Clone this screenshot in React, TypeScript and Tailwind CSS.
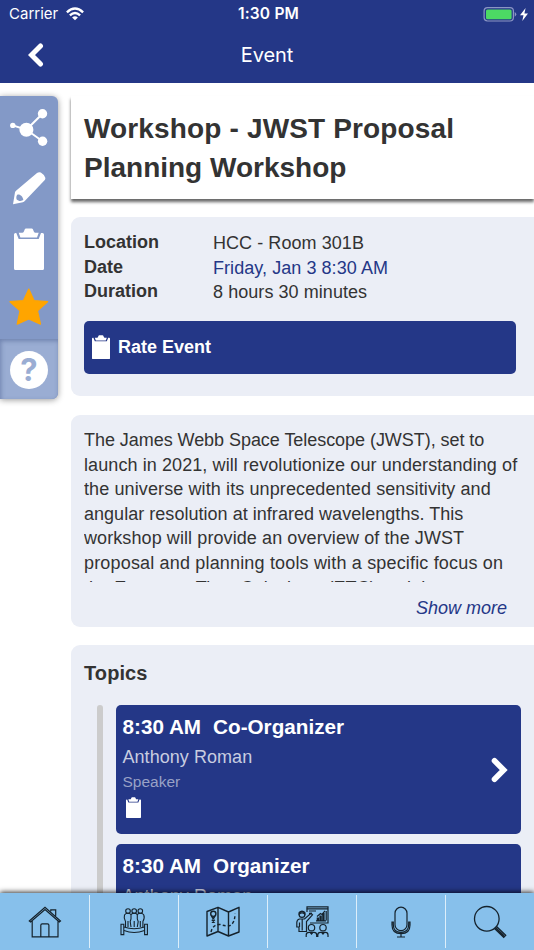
import React from 'react';

interface Topic {
  id: number;
  time: string;
  title: string;
  speaker: string;
  role: string;
}

const topics: Topic[] = [
  { id: 1, time: '8:30 AM', title: 'Co-Organizer', speaker: 'Anthony Roman', role: 'Speaker' },
  { id: 2, time: '8:30 AM', title: 'Organizer', speaker: 'Anthony Roman', role: 'Speaker' },
];

const ClipboardIcon = ({ className }: { className: string }) => (
  <svg viewBox="0 0 30 42" className={className} fill="currentColor" preserveAspectRatio="none">
    <path d="M1.500 5H2.300L4.700 11H24.700L27 5H28.500A1.500 1.500 0 0 1 30 6.500V40.500A1.500 1.500 0 0 1 28.500 42H1.500A1.500 1.500 0 0 1 0 40.500V6.500A1.500 1.500 0 0 1 1.500 5Z" />
    <path d="M4.700 4.700H8.500Q9.700 4.500 10 3.300L10.800 1.300Q11 .6 12 .6H17.700Q18.600 .6 18.900 1.300L19.700 3.300Q20 4.500 21.200 4.700H24.700L23 9.500H6.400Z" />
  </svg>
);

const ShareIcon = () => (
  <svg viewBox="0 0 58 40" className="h-10 w-[58px]" fill="white" stroke="white">
    <path d="M42.500 5.800L26.400 21.700L42.600 33.300M26.400 21.700L12.800 17.400" fill="none" strokeWidth="2" />
    <circle cx="26.400" cy="21.700" r="7" stroke="none" />
    <circle cx="42.500" cy="5.800" r="4.700" stroke="none" />
    <circle cx="42.600" cy="33.300" r="4.700" stroke="none" />
    <circle cx="12.800" cy="17.400" r="2.700" stroke="none" />
  </svg>
);

const PencilIcon = () => (
  <svg viewBox="0 0 58 40" className="h-10 w-[58px]" fill="white">
    <path d="M13 36.300L15 24.300Q15.200 23.400 16 22.700L37 5Q38.800 3.700 40.800 4.500Q44 6.300 45.300 9.800Q45.600 11 44.800 12L25 32.800Q24 34 22.800 34.300Z" />
    <path d="M17 27C19.500 25.600 22.700 28.300 23.300 31.800C22 33.400 18.500 33.500 16.500 31.200Q15.800 29 17 27Z" fill="#8399c7" />
  </svg>
);

const StarIcon = () => (
  <svg viewBox="0 0 58 40" className="h-10 w-[58px]" fill="#ffa500" stroke="#ffa500" strokeLinejoin="round" strokeWidth="1.200">
    <path d="M28.800 2L34 13.500L47.600 14.700L37.500 23.800L40.500 37.200L28.800 32L17.200 37.200L20 23.800L10 14.700L23.500 13.500Z" />
  </svg>
);

const HomeIcon = () => (
  <svg viewBox="0 0 34 34" className="size-[34px]" fill="none" stroke="#15222c" strokeWidth="1.200">
    <path d="M1.300 16L17 2.200L32.500 16L31.300 17L17 4.500L2.600 17ZM4.200 16V31.800H30V16M12.800 31.800V20.200Q12.800 18.800 14.200 18.800H19.500Q20.900 18.800 20.900 20.200V31.800M22.800 6.200V4.800H27.700V10.800" />
  </svg>
);

const MeetingIcon = () => (
  <svg viewBox="0 0 34 34" className="size-[34px]" fill="none" stroke="#15222c" strokeWidth="1.100">
    <circle cx="11" cy="6" r="2.300" />
    <circle cx="17.200" cy="6" r="2.300" />
    <circle cx="23.300" cy="6" r="2.300" />
    <path d="M8.500 22V16.500Q6.500 13 7.500 10Q8.500 8.300 11 8.300Q13 8.300 14 9.600Q15.200 8.300 17.200 8.300Q19.200 8.300 20.300 9.600Q21.400 8.300 23.300 8.300Q26 8.300 26.800 10Q28 13 25.900 16.500V22M14 9.600V14L13.200 16.500L14 22M20.300 9.600V14L21.200 16.500L20.300 22M11 16V22M17.200 16V22M23.300 16V22" />
    <path d="M7 22Q17 25.500 27.500 22M7 25.500Q17 29.500 27.500 25.500" />
    <path d="M4 19.200H6.800V29.600H4ZM27.600 19.200H30.400V29.600H27.600Z" />
  </svg>
);

const MapIcon = () => (
  <svg viewBox="0 0 34 34" className="size-[34px]" fill="none" stroke="#15222c" strokeWidth="1.400" strokeLinejoin="round">
    <path d="M1 6.500L12 2.300L22.500 7L33 2.300V27L22.500 31L12 26.500L1 31ZM12 2.300V26.500M22.500 7V31" />
    <circle cx="7.300" cy="8.800" r="2.600" />
    <path d="M5.500 11L7.300 13.800L9 11M5.800 14.800L8.800 17.600M8.800 14.800L5.800 17.600" />
    <path d="M5 27Q7 19 14 19.500Q20 21.500 24 20.500Q29 18 29 8.500" strokeDasharray="3 2.200" />
  </svg>
);

const PresentationIcon = () => (
  <svg viewBox="0 0 34 34" className="size-[34px]" fill="none" stroke="#15222c" strokeWidth="1.200">
    <path d="M12 7V1.800H33V18H15M11.300 3.800H33M14 6H21M14 8.300H17M31.200 6V15.500" />
    <path d="M22.300 15.500V13H23.500V15.500M25 15.500V11H26.200V15.500M27.800 15.500V8.500H29V15.500M22 11.500L25.500 8.500L27 9.500L30 5.800M21 15.800H31" />
    <circle cx="7" cy="9.500" r="2.900" />
    <path d="M4.200 9Q7 6.800 9.800 9V7.500Q7 4.800 4.200 7.500ZM10 26.500H4V22H1.800V17.500Q1.800 14.800 4.500 14H9.500L16 8.300L17.500 9.800L11.500 16.500V26.500ZM4.500 17.500V22M7.200 14.500V25.500" />
    <circle cx="16.500" cy="22.700" r="3.200" />
    <circle cx="28" cy="22.700" r="3.200" />
    <path d="M11.200 32V30Q11.200 27.300 14 27.300H19Q21.700 27.300 21.700 30V32M22.800 32V30Q22.800 27.300 25.500 27.300H30.500Q33 27.300 33 30V32M15 27.300L16.500 29L18 27.300M26.500 27.300L28 29L29.500 27.300" />
  </svg>
);

const MicIcon = () => (
  <svg viewBox="0 0 34 34" className="size-[34px]" fill="none" stroke="#15222c" strokeWidth="1.200">
    <rect x="11" y="2.200" width="12" height="23.500" rx="6" />
    <path d="M9.300 17V19.500Q9.300 27.300 17 27.300Q24.700 27.300 24.700 19.500V17H26V20Q26 28.700 17 28.700Q8 28.700 8 20V17ZM17 28.700V31.800M13 32H21" />
  </svg>
);

const SearchIcon = () => (
  <svg viewBox="0 0 34 34" className="size-[34px]" fill="none" stroke="#15222c" strokeWidth="1.300">
    <circle cx="13.800" cy="13.800" r="12.300" />
    <path d="M21.300 23.300L30.700 32.300L32.700 30.300L23.300 21.300M22.600 22.600L31 30.700" />
  </svg>
);

const navItems = [
  { id: 'home', icon: <HomeIcon /> },
  { id: 'meeting', icon: <MeetingIcon /> },
  { id: 'map', icon: <MapIcon /> },
  { id: 'sessions', icon: <PresentationIcon /> },
  { id: 'speakers', icon: <MicIcon /> },
  { id: 'search', icon: <SearchIcon /> },
];

const Header = () => (
  <header className="h-[83px] shrink-0 bg-[#243787] text-white font-['Inter',sans-serif]">
    <div className="grid h-7 grid-cols-3 items-center pl-[9px] pr-1.5">
      <div className="flex items-center gap-2">
        <span className="text-[15px] leading-7">Carrier</span>
        <svg viewBox="0 0 18 14" className="h-3.5 w-[18px]" fill="none" stroke="white" strokeWidth="2.400">
          <path d="M.9 5.300Q9 -2.200 17.100 5.300M3.900 8.400Q9 3.700 14.100 8.400" />
          <path d="M9 13.300L6.100 10.400Q9 8 11.900 10.400Z" fill="white" stroke="none" />
        </svg>
      </div>
      <span className="text-center text-[15.500px] font-semibold leading-7 tracking-[0.200px]">1:30 PM</span>
      <div className="flex items-center justify-end gap-[3px]">
        <svg viewBox="0 0 33 15" className="h-[15px] w-[34px]">
          <rect x=".6" y=".6" width="29.300" height="13.400" rx="3.400" fill="none" stroke="#8b96c4" strokeWidth="1.200" />
          <rect x="2.500" y="2.500" width="25.600" height="9.700" rx="1.500" fill="#4cd964" />
          <path d="M31.200 5V9.700Q32.800 8.500 32.800 7.300Q32.800 6 31.200 5Z" fill="#8b96c4" />
        </svg>
        <svg viewBox="0 0 8 13" className="h-[13px] w-2" fill="white">
          <path d="M5.600 0L0 7.300H3.500L2.300 13L8 5.400H4.400Z" />
        </svg>
      </div>
    </div>
    <div className="grid h-[53px] grid-cols-3 items-center">
      <svg viewBox="0 0 16 24" className="ml-7 h-6 w-4" fill="none" stroke="white" strokeWidth="5" strokeLinecap="round">
        <path d="M12.500 3L3.500 12L12.500 21" strokeLinejoin="miter" />
      </svg>
      <h1 className="text-center text-[20px] leading-6 tracking-[-0.100px]">Event</h1>
    </div>
  </header>
);

const Sidebar = () => (
  <aside className="mt-[13px] h-[303px] w-[58px] shrink-0 rounded-r-md bg-[#8399c7] shadow-[0_1px_6px_rgba(0,0,0,0.400)]">
    <div className="flex h-[243px] flex-col text-white">
      <div className="flex h-[52px] items-end"><ShareIcon /></div>
      <div className="mt-5 h-10"><PencilIcon /></div>
      <div className="mt-5 flex justify-center"><ClipboardIcon className="h-[42px] w-[30px]" /></div>
      <div className="mt-[17px] h-10"><StarIcon /></div>
    </div>
    <div className="flex h-[60px] items-center justify-center rounded-br-md bg-[#9aadd3] pt-0.5 shadow-[inset_1px_2px_4px_rgba(70,90,140,0.500)]">
      <div className="flex size-[38px] items-center justify-center rounded-full bg-white font-['Inter',sans-serif] text-[31px] font-bold leading-[38px] text-[#9aadd3]">
        ?
      </div>
    </div>
  </aside>
);

const TopicCard = ({ topic }: { topic: Topic }) => (
  <div className="flex h-[129px] items-center justify-between rounded-[5px] bg-[#243787] pl-[6.500px] pr-[13px]">
    <div className="h-full pt-2.5">
      <div className="flex gap-3 whitespace-nowrap text-[20.700px] font-bold leading-6 text-white">
        <span>{topic.time}</span>
        <span>{topic.title}</span>
      </div>
      <div className="mt-1.5 text-[18px] leading-6 tracking-[0.050px] text-[#c8cde0]">{topic.speaker}</div>
      <div className="mt-[3px] text-[15.500px] leading-5 text-[#99a2c6]">{topic.role}</div>
      <ClipboardIcon className="ml-[3px] mt-[5px] h-[21px] w-[15px] text-white" />
    </div>
    <svg viewBox="0 0 18 26" className="h-[26px] w-[18px]" fill="none" stroke="white" strokeWidth="5.600" strokeLinecap="round">
      <path d="M4.500 3.800L13.700 13L4.500 22.200" />
    </svg>
  </div>
);

const App: React.FC = () => {
  return (
    <div className="flex h-[950px] w-[534px] flex-col overflow-hidden bg-white font-['Liberation_Sans',sans-serif] text-[#333333]">
      <Header />

      <div className="flex min-h-0 flex-1 overflow-hidden">
        <Sidebar />

        <main className="ml-[13px] mt-[13px] flex min-w-0 flex-1 flex-col">
          {/* Title */}
          <div className="h-[103px] shrink-0 bg-white pl-[13px] pt-[13px] shadow-[0_3px_3px_rgba(0,0,0,0.600)]">
            <h2 className="whitespace-nowrap text-[28px] font-bold leading-[39px]">
              <span className="tracking-[0.150px]">Workshop - JWST Proposal</span><br />
              Planning Workshop
            </h2>
          </div>

          {/* Event details */}
          <section className="mt-[18px] h-[179px] shrink-0 rounded-l-[9px] bg-[#ebeef6] pl-[13px] pr-[18px] pt-[13px]">
            <div className="grid grid-cols-[129px_1fr] text-[18px] leading-[24.500px]">
              <div className="font-bold">Location<br />Date<br />Duration</div>
              <div className="pt-px tracking-[0.060px]">
                HCC - Room 301B<br />
                <span className="text-[#243787]">Friday, Jan 3 8:30 AM</span><br />
                8 hours 30 minutes
              </div>
            </div>
            <button className="mt-4 flex h-[53px] w-full items-center gap-2 rounded-[5px] bg-[#243787] pl-2 text-[18px] font-bold text-white">
              <ClipboardIcon className="h-6 w-[18px]" />
              Rate Event
            </button>
          </section>

          {/* Description */}
          <section className="mt-[19px] h-[212px] shrink-0 rounded-l-[9px] bg-[#ebeef6] pl-[13px] pt-[13px]">
            <p className="h-[154px] overflow-hidden whitespace-nowrap text-[18px] leading-[24.600px]">
              <span className="tracking-[-0.050px]">The James Webb Space Telescope (JWST), set to</span><br />
              <span className="tracking-[0.090px]">launch in 2021, will revolutionize our understanding of</span><br />
              <span className="tracking-[0.110px]">the universe with its unprecedented sensitivity and</span><br />
              <span className="tracking-[0.030px]">angular resolution at infrared wavelengths. This</span><br />
              <span className="tracking-[0.090px]">workshop will provide an overview of the JWST</span><br />
              <span className="tracking-[0.170px]">proposal and planning tools with a specific focus on</span><br />
              <span className="tracking-[0.080px]">the Exposure Time Calculator (ETC) and the</span>
            </p>
            <div className="mt-3.5 pr-[27px] text-right text-[18px] italic leading-6 text-[#243787]">Show more</div>
          </section>

          {/* Topics */}
          <section className="mt-[18px] shrink-0 rounded-l-[9px] bg-[#ebeef6] pl-[13px] pr-[13px] pt-4">
            <h3 className="text-[20px] font-bold leading-6 tracking-[0.100px]">Topics</h3>
            <div className="mt-5 flex">
              <div className="ml-[13px] w-1.5 rounded-full bg-[#cccccc]" />
              <div className="ml-[13px] flex flex-1 flex-col gap-2.5">
                {topics.map(topic => (
                  <TopicCard key={topic.id} topic={topic} />
                ))}
              </div>
            </div>
          </section>
        </main>
      </div>

      <nav className="relative flex h-[57px] shrink-0 bg-[#87c0eb] py-0.5 shadow-[0_-1px_5px_rgba(0,0,0,0.800)]">
        {navItems.map(item => (
          <div key={item.id} className="flex w-[89px] items-center justify-center border-r border-[#dceefa] first:w-[90px] last:w-[88px] last:border-r-0">
            {item.icon}
          </div>
        ))}
      </nav>
    </div>
  );
};

export default App;
